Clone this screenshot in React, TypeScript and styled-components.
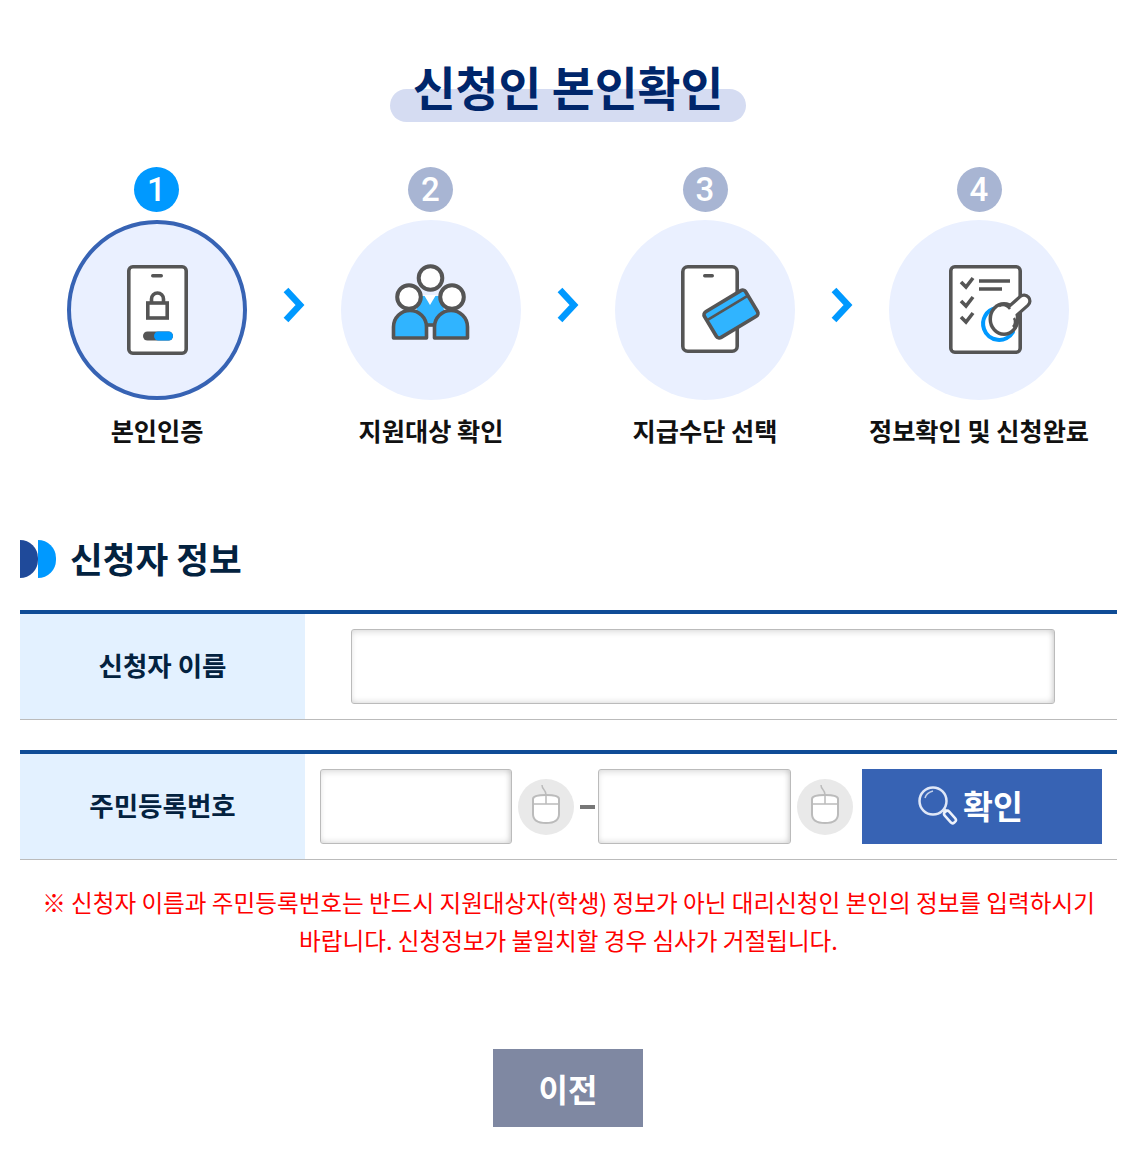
import styled, { createGlobalStyle } from "styled-components";

const GlobalStyle = createGlobalStyle`
  html, body {
    margin: 0;
    padding: 0;
    background: #fff;
  }
  body {
    font-family: "Noto Sans CJK KR", "Noto Sans", sans-serif;
  }
`;

const dark = "#555";
const blue = "#30b4ff";

const PhoneLockIcon = () => (
  <svg width="100" height="100" viewBox="0 0 100 100">
    <rect x="21.8" y="6.8" width="57.4" height="86.4" rx="4" fill="#fff" stroke={dark} strokeWidth="3.6" />
    <rect x="44" y="14" width="12" height="3.4" rx="1.7" fill={dark} />
    <rect x="40.8" y="43" width="19.4" height="15" fill="none" stroke={dark} strokeWidth="3.6" />
    <path d="M44.5 43v-4a6 6 0 0 1 12 0v4" fill="none" stroke={dark} strokeWidth="3.6" />
    <rect x="36" y="71.5" width="30" height="9" rx="4.5" fill={dark} />
    <rect x="47" y="71.5" width="19" height="9" rx="4.5" fill="#0099ff" />
  </svg>
);

const PeopleIcon = () => (
  <svg width="100" height="100" viewBox="0 0 100 100">
    <path d="M33 64L38 36H60L66 64Z" fill={blue} />
    <path d="M43 35h12l-6 10z" fill="#fff" />
    <circle cx="49.5" cy="18" r="11.8" fill="#fff" stroke={dark} strokeWidth="4" />
    <circle cx="28" cy="37" r="11.8" fill="#fff" stroke={dark} strokeWidth="4" />
    <circle cx="71" cy="37" r="11.8" fill="#fff" stroke={dark} strokeWidth="4" />
    <path d="M12.5 78V67a16.5 16.5 0 0 1 33 0v11Z" fill={blue} stroke={dark} strokeWidth="3.6" strokeLinejoin="round" />
    <path d="M53.5 78V67a16.5 16.5 0 0 1 33 0v11Z" fill={blue} stroke={dark} strokeWidth="3.6" strokeLinejoin="round" />
    <path d="M45 65h9" stroke={dark} strokeWidth="3.6" />
  </svg>
);

const PhoneCardIcon = () => (
  <IconSvg width="100" height="100" viewBox="0 0 100 100">
    <rect x="27.8" y="6.8" width="54.4" height="84.4" rx="5" fill="#fff" stroke={dark} strokeWidth="3.6" />
    <rect x="48" y="14" width="11" height="3.4" rx="1.7" fill={dark} />
    <g transform="rotate(-31 76 54)">
      <rect x="52" y="39" width="48" height="30" rx="3.5" fill={blue} stroke={dark} strokeWidth="3.6" />
      <path d="M52 47H100" stroke={dark} strokeWidth="2.6" />
    </g>
  </IconSvg>
);

const ChecklistIcon = () => (
  <IconSvg width="100" height="100" viewBox="0 0 100 100">
    <rect x="21.8" y="6.8" width="69.4" height="85.4" rx="4" fill="#fff" stroke={dark} strokeWidth="3.6" />
    <path d="M32 22l5 5 7-9M32 41l5 5 7-9M32 57l5 5 7-9" fill="none" stroke={dark} strokeWidth="3.6" />
    <path d="M50 21H81M50 29H73" fill="none" stroke={dark} strokeWidth="3.4" />
    <path d="M84 72a16 16 0 0 1-29-3 16 16 0 0 1 12-21" fill="none" stroke="#0099ff" strokeWidth="4" strokeLinecap="round" />
    {/* stamp: dark silhouette with a smaller white one on top */}
    <path d="M95 41L78 56" stroke={dark} strokeWidth="15" strokeLinecap="round" />
    <ellipse cx="75" cy="59" rx="15.5" ry="17" fill={dark} />
    <path d="M95 41L78 56" stroke="#fff" strokeWidth="8.5" strokeLinecap="round" />
    <ellipse cx="75" cy="59" rx="12" ry="13.5" fill="#fff" />
    <path d="M70 46c4-2 8-1 11 3M85 58c2 3 1 7-1 9" fill="none" stroke={dark} strokeWidth="2.6" />
  </IconSvg>
);

const MouseIcon = () => (
  <svg width="56" height="56" viewBox="0 0 56 56">
    <path d="M15 20c0-3 6-4 13-4s13 1 13 4v15c0 7-6 9-13 9s-13-2-13-9Z" fill="#fff" stroke="#bbb" strokeWidth="2" />
    <path d="M15 25H41M28 16V25" fill="none" stroke="#bbb" strokeWidth="1.5" />
    <path d="M28 16c0-6-4-5-4-10" fill="none" stroke="#bbb" strokeWidth="1.5" />
  </svg>
);

const SearchIcon = () => (
  <svg width="42" height="44" viewBox="0 0 42 44">
    <circle cx="16" cy="16" r="13.5" fill="none" stroke="#dfe7f7" strokeWidth="2.5" />
    <path d="M8 13c1-4 4-6 8-7" fill="none" stroke="#fff" strokeWidth="1.5" opacity="0.7" />
    <path d="M25 26l3-3 2 2-3 3z" fill="#dfe7f7" />
    <rect x="30" y="25" width="6" height="14" rx="2.5" transform="rotate(-42 33 32)" fill="none" stroke="#eef2fb" strokeWidth="2.5" />
  </svg>
);

const stepList = [
  { num: 1, label: "본인인증", icon: <PhoneLockIcon /> },
  { num: 2, label: "지원대상 확인", icon: <PeopleIcon /> },
  { num: 3, label: "지급수단 선택", icon: <PhoneCardIcon /> },
  { num: 4, label: "정보확인 및 신청완료", icon: <ChecklistIcon /> },
];

export default function App() {
  return (
    <Page>
      <GlobalStyle />
      <TitleWrap>
        <Title>신청인 본인확인</Title>
      </TitleWrap>

      <Steps>
        {stepList.map((step, i) => (
          <Step key={step.num}>
            <StepNum $active={i === 0}>{step.num}</StepNum>
            <StepCircle $active={i === 0}>{step.icon}</StepCircle>
            <StepLabel>{step.label}</StepLabel>
            {i < stepList.length - 1 && (
              <Chevron width="24" height="38" viewBox="0 0 24 38">
                <path d="M4 4L18 19L4 34" fill="none" stroke="#0099ff" strokeWidth="6.5" />
              </Chevron>
            )}
          </Step>
        ))}
      </Steps>

      <SectionHead>
        <SectionMark>
          <span />
          <span />
        </SectionMark>
        <SectionTitle>신청자 정보</SectionTitle>
      </SectionHead>

      <FormRow>
        <RowLabel>신청자 이름</RowLabel>
        <NameCell>
          <NameInput type="text" />
        </NameCell>
      </FormRow>

      <FormRow>
        <RowLabel>주민등록번호</RowLabel>
        <IdCell>
          <IdInput type="text" />
          <MouseBadge>
            <MouseIcon />
          </MouseBadge>
          <Dash />
          <IdInputBack type="text" />
          <MouseBadge>
            <MouseIcon />
          </MouseBadge>
          <ConfirmButton>
            <SearchIcon />
            확인
          </ConfirmButton>
        </IdCell>
      </FormRow>

      <Notice>
        ※ 신청자 이름과 주민등록번호는 반드시 지원대상자(학생) 정보가 아닌 대리신청인 본인의 정보를 입력하시기 바랍니다.
        신청정보가 불일치할 경우 심사가 거절됩니다.
      </Notice>

      <Footer>
        <PrevButton>이전</PrevButton>
      </Footer>
    </Page>
  );
}

const Page = styled.div`
  width: 1097px;
  height: 1150px;
  box-sizing: border-box;
  margin-left: 20px;
  padding-top: 60px;
`;

const IconSvg = styled.svg`
  overflow: visible;
`;

const TitleWrap = styled.div`
  display: flex;
  justify-content: center;
  padding-right: 1px;
  margin-bottom: 55px;
`;

const Title = styled.h1`
  position: relative;
  z-index: 0;
  width: 356px;
  margin: 0;
  font-size: 46.6px;
  line-height: 52px;
  font-weight: 700;
  text-align: center;
  white-space: nowrap;
  color: #00266b;

  &::before {
    content: "";
    position: absolute;
    z-index: -1;
    left: 0;
    right: 0;
    bottom: -10px;
    height: 33px;
    border-radius: 17px;
    background: #d5dcf2;
  }
`;

const Steps = styled.div`
  display: grid;
  grid-template-columns: repeat(4, 274px);
`;

const Step = styled.div`
  position: relative;
  display: flex;
  flex-direction: column;
  align-items: center;
`;

const StepNum = styled.div<{ $active: boolean }>`
  width: 45px;
  height: 45px;
  margin-bottom: 8px;
  border-radius: 50%;
  background: ${(p) => (p.$active ? "#0099ff" : "#a8b5d3")};
  color: #fff;
  font-family: Roboto, "Noto Sans", sans-serif;
  font-size: 33px;
  font-weight: 500;
  line-height: 46px;
  text-align: center;

  ${Step}:nth-child(-n + 2) & {
    margin-left: -1px;
  }
`;

const StepCircle = styled.div<{ $active: boolean }>`
  display: flex;
  align-items: center;
  justify-content: center;
  box-sizing: border-box;
  width: 180px;
  height: 180px;
  border-radius: 50%;
  background: #eaf0ff;
  border: ${(p) => (p.$active ? "4px solid #3763b4" : "none")};
`;

const StepLabel = styled.div`
  margin-top: 15px;
  font-size: 25.2px;
  line-height: 30px;
  font-weight: 700;
  color: #111;
  white-space: nowrap;
`;

const Chevron = styled.svg`
  position: absolute;
  top: 119px;
  right: -12px;
`;

const SectionHead = styled.div`
  display: flex;
  align-items: center;
  margin-top: 93px;
  margin-bottom: 32px;
`;

const SectionMark = styled.div`
  display: flex;
  margin: 2px 14px 0 0;

  span {
    display: block;
    width: 18px;
    height: 38px;
    border-radius: 0 19px 19px 0;
    background: #1f4a9a;
  }

  span + span {
    background: #0099ff;
  }
`;

const SectionTitle = styled.h2`
  margin: 0;
  font-size: 35.6px;
  line-height: 40px;
  font-weight: 700;
  color: #03223f;
`;

const FormRow = styled.div`
  display: flex;
  box-sizing: border-box;
  height: 110px;
  border-top: 4px solid #0f4c96;
  border-bottom: 1px solid #bbb;

  & + & {
    margin-top: 30px;
  }
`;

const RowLabel = styled.div`
  flex: 0 0 285px;
  display: flex;
  align-items: center;
  justify-content: center;
  padding-bottom: 4px;
  box-sizing: border-box;
  background: #e3f1ff;
  font-size: 26.5px;
  font-weight: 700;
  color: #03223f;
`;

const NameCell = styled.div`
  display: flex;
  align-items: center;
  padding-left: 46px;
`;

const IdCell = styled.div`
  display: flex;
  align-items: center;
  padding-left: 15px;
`;

const TextBox = styled.input`
  box-sizing: border-box;
  height: 75px;
  padding: 0 10px;
  border: 1px solid #bbb;
  border-radius: 3px;
  background: #fff;
  box-shadow: inset 0 3px 6px -1px rgba(0, 0, 0, 0.14), inset -3px -3px 6px -2px rgba(0, 0, 0, 0.14);
  outline: none;
`;

const NameInput = styled(TextBox)`
  width: 704px;
`;

const IdInput = styled(TextBox)`
  width: 192px;
`;

const IdInputBack = styled(TextBox)`
  width: 193px;
`;

const MouseBadge = styled.div`
  flex: 0 0 56px;
  height: 56px;
  margin-left: 6px;
  border-radius: 50%;
  background: #e9e9e9;
`;

const Dash = styled.div`
  width: 15px;
  height: 4px;
  margin: 0 3px 0 6px;
  background: #777;
`;

const ConfirmButton = styled.button`
  display: flex;
  align-items: center;
  justify-content: center;
  gap: 4px;
  box-sizing: border-box;
  width: 240px;
  height: 75px;
  margin-left: 9px;
  padding: 0 24px 4px 0;
  border: none;
  background: #3763b4;
  color: #fff;
  font-family: inherit;
  font-size: 32.5px;
  font-weight: 700;

  svg {
    margin-top: 4px;
  }
`;

const Notice = styled.p`
  margin: 23px 0 0;
  font-size: 23.6px;
  line-height: 38px;
  text-align: center;
  word-break: keep-all;
  color: #f00;
`;

const Footer = styled.div`
  display: flex;
  justify-content: center;
  padding-right: 1px;
  margin-top: 90px;
`;

const PrevButton = styled.button`
  width: 150px;
  height: 78px;
  border: none;
  background: #7f88a2;
  color: #fff;
  font-family: inherit;
  font-size: 32px;
  font-weight: 700;
`;
